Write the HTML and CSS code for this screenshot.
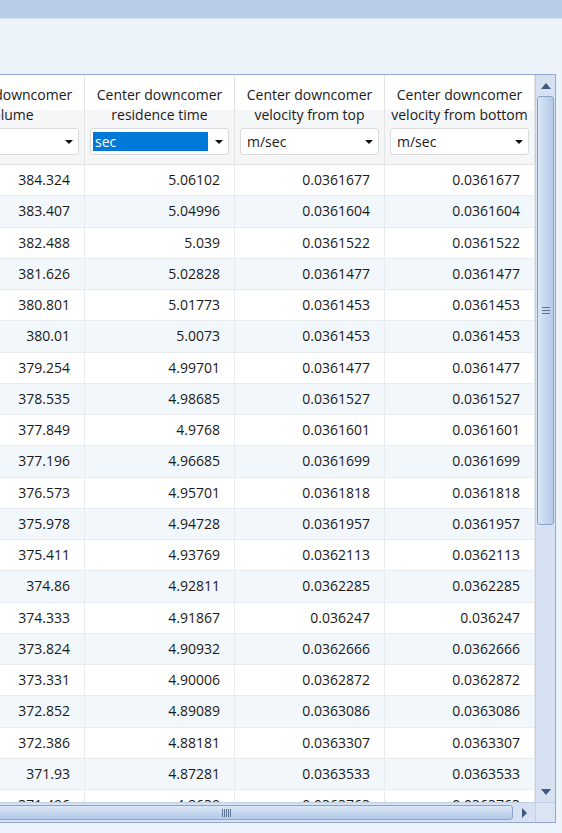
FILE: index.html
```html
<!DOCTYPE html>
<html>
<head>
<meta charset="utf-8">
<link rel="stylesheet" href="styles.css">
</head>
<body>
<div class="titlebar"></div>
<div class="toolbar"></div>
<div class="frame">
  <div class="viewport">
    <div class="grid" id="grid">
      <div class="hcell"><div class="htext">Center downcomer<br>volume</div><div class="combo"><span class="val"></span><span class="arrow"></span></div></div>
      <div class="hcell"><div class="htext">Center downcomer<br>residence time</div><div class="combo"><span class="val sel">sec</span><span class="arrow"></span></div></div>
      <div class="hcell"><div class="htext">Center downcomer<br>velocity from top</div><div class="combo"><span class="val">m/sec</span><span class="arrow"></span></div></div>
      <div class="hcell"><div class="htext">Center downcomer<br>velocity from bottom</div><div class="combo"><span class="val">m/sec</span><span class="arrow"></span></div></div>
    </div>
  </div>
  <div class="vscroll">
    <div class="sbtn"><span class="tri-up"></span></div>
    <div class="vtrack"><div class="vthumb"><span class="vgrip"></span></div></div>
    <div class="sbtn"><span class="tri-down"></span></div>
  </div>
  <div class="hscroll">
    <div class="hthumb"><span class="hgrip"></span></div>
    <div class="hbtn"><span class="tri-right"></span></div>
  </div>
  <div class="corner"></div>
</div>
<script src="app.js"></script>
</body>
</html>
```
FILE: app.js
```js
const c1 = ["384.324","383.407","382.488","381.626","380.801","380.01","379.254","378.535","377.849","377.196","376.573","375.978","375.411","374.86","374.333","373.824","373.331","372.852","372.386","371.93","371.496"];
const c2 = ["5.06102","5.04996","5.039","5.02828","5.01773","5.0073","4.99701","4.98685","4.9768","4.96685","4.95701","4.94728","4.93769","4.92811","4.91867","4.90932","4.90006","4.89089","4.88181","4.87281","4.8639"];
const c3 = ["0.0361677","0.0361604","0.0361522","0.0361477","0.0361453","0.0361453","0.0361477","0.0361527","0.0361601","0.0361699","0.0361818","0.0361957","0.0362113","0.0362285","0.036247","0.0362666","0.0362872","0.0363086","0.0363307","0.0363533","0.0363763"];
const grid = document.getElementById("grid");
for (let i = 0; i < c1.length; i++) {
  [c1[i], c2[i], c3[i], c3[i]].forEach(v => {
    const d = document.createElement("div");
    d.className = "cell" + (i % 2 ? " alt" : "");
    d.textContent = v;
    grid.appendChild(d);
  });
}
```
FILE: styles.css
```css
html, body { margin: 0; padding: 0; }
body {
  background: #ecf3fb;
  font-family: "Open Sans", "Noto Sans", sans-serif;
  font-size: 14px;
  color: #1a1a1a;
  width: 562px;
  height: 833px;
  overflow: hidden;
}
.titlebar { height: 18px; background: #bacde6; border-bottom: 1px solid #d6e3f3; }
.toolbar { height: 55px; }
.frame {
  width: 555px;
  height: 747px;
  border: 1px solid #90a9cc;
  border-left: none;
  display: grid;
  grid-template-columns: 535px 20px;
  grid-template-rows: 727px 20px;
  background: #fff;
}
.viewport { overflow: hidden; }
.grid {
  margin-left: -65px;
  display: grid;
  grid-template-columns: repeat(4, 150px);
  grid-auto-rows: 31.25px;
  grid-template-rows: 90px;
}
.hcell {
  box-sizing: border-box;
  border-right: 1px solid #e3e3e3;
  border-bottom: 1px solid #e3e3e3;
  background: linear-gradient(#ffffff 0 39%, #f5f6f8 39%);
  padding: 10px 5px 0 5px;
  display: flex;
  flex-direction: column;
  align-items: stretch;
  text-align: center;
}
.htext { line-height: 20px; height: 40px; white-space: nowrap; }
.combo {
  margin-top: 3px;
  height: 27px;
  box-sizing: border-box;
  border: 1px solid #dadada;
  border-radius: 3px;
  background: #fff;
  display: flex;
  align-items: center;
  padding: 0 5px 0 2px;
  text-align: left;
}
.val { flex: 1; height: 19px; line-height: 19px; padding-left: 4px; margin-right: 7px; }
.val.sel { background: #0078d7; color: #fff; padding-left: 2px; }
.arrow {
  width: 0; height: 0;
  border-left: 4px solid transparent;
  border-right: 4px solid transparent;
  border-top: 4px solid #111;
}
.cell {
  box-sizing: border-box;
  border-right: 1px solid #e9ecef;
  border-bottom: 1px solid #e9ecef;
  text-align: right;
  padding-right: 14px;
  line-height: 30px;
  background: #fff;
  white-space: nowrap;
}
.cell.alt { background: #f2f7fc; }
.vscroll {
  grid-row: 1; grid-column: 2;
  background: #d6e2f1;
  border-left: 1px solid #bfcfe4;
  display: flex; flex-direction: column;
}
.sbtn { height: 21px; display: flex; align-items: center; justify-content: center; }
.vtrack { flex: 1; padding: 0 1px; display: flex; flex-direction: column; }
.vthumb {
  height: 429px;
  border: 1px solid #8aa4c8;
  border-radius: 3px;
  background: linear-gradient(90deg, #dbe7f6, #c2d5ee 60%, #b5cae7);
  display: flex; align-items: center; justify-content: center;
  box-sizing: border-box;
}
.vgrip { width: 8px; height: 7px; background: repeating-linear-gradient(#5d7396 0 1px, transparent 1px 3px); }
.tri-up { width: 0; height: 0; border-left: 5px solid transparent; border-right: 5px solid transparent; border-bottom: 6px solid #3f5a82; }
.tri-down { width: 0; height: 0; border-left: 5px solid transparent; border-right: 5px solid transparent; border-top: 6px solid #3f5a82; }
.tri-right { width: 0; height: 0; border-top: 5px solid transparent; border-bottom: 5px solid transparent; border-left: 5px solid #3f5a82; }
.hscroll {
  grid-row: 2; grid-column: 1;
  background: #d6e2f1;
  border-top: 1px solid #bfcfe4;
  display: flex; align-items: center;
}
.hthumb {
  height: 15px;
  width: 517px;
  margin-left: -4px;
  box-sizing: border-box;
  border: 1px solid #8aa4c8;
  border-radius: 3px;
  background: linear-gradient(#dbe7f6, #c2d5ee 60%, #b5cae7);
  display: flex; align-items: center; justify-content: center;
}
.hgrip { width: 9px; height: 8px; margin-left: -56px; background: repeating-linear-gradient(90deg, #5d7396 0 1px, transparent 1px 2px); }
.hbtn { flex: 1; display: flex; justify-content: center; }
.corner { grid-row: 2; grid-column: 2; background: #dbe5f2; border-left: 1px solid #bfcfe4; border-top: 1px solid #bfcfe4; }
```
